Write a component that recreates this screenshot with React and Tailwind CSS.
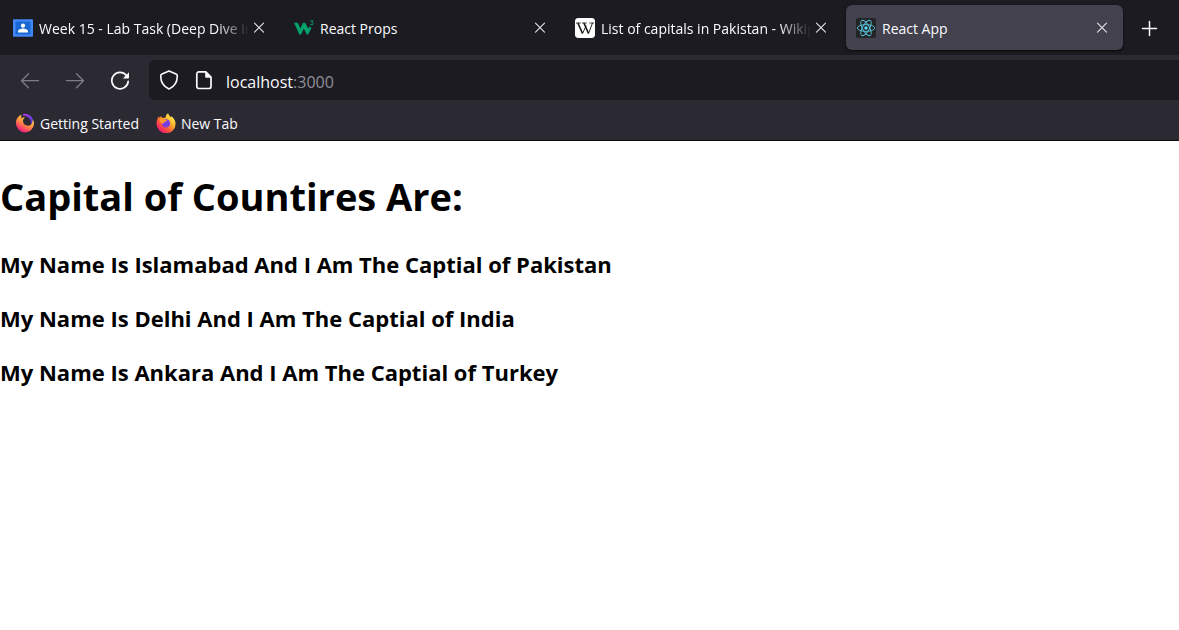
import React from "react";

function ClassroomIcon() {
  return (
    <svg viewBox="0 0 20 20" className="size-5 shrink-0" aria-hidden="true">
      <rect x="0" y="1.3" width="20" height="17.4" rx="0.8" fill="#4285f4" />
      <rect x="2.6" y="3.6" width="14.8" height="12.8" fill="#1967d2" />
      <circle cx="10" cy="7.7" r="2.1" fill="#fff" />
      <path d="M5 14.6v-1.3c0-1.9 3.3-2.8 5-2.8s5 .9 5 2.8v1.3z" fill="#fff" />
    </svg>
  );
}

function SchoolsIcon() {
  return (
    <svg viewBox="0 0 20 20" className="size-5 shrink-0" fill="none" aria-hidden="true">
      <path d="M0 4.800h3.800l2.600 5.600 2.600-5.600h2.200l3 6 1.200-2.300 2.100 1.300-3.300 6.600h-1.400l-3-6-2.700 6H5.400z" fill="#04a36c" />
      <path d="M16.200 2.800h2.900l-1.500 1.600c1.100 0 1.600.5 1.600 1.200 0 1.300-2 1.600-3.100.8" stroke="#04a36c" strokeWidth="0.9" />
    </svg>
  );
}

function WikiIcon() {
  return (
    <svg viewBox="0 0 20 20" className="size-5 shrink-0" fill="none" aria-hidden="true">
      <rect width="20" height="20" rx="3.4" fill="#fff" />
      <g stroke="#111">
        <path d="M1 5h4.800M7 5h4.800M14.400 5H19" strokeWidth="0.8" />
        <path d="M2.900 5l4.600 10.400M8.900 5l4.600 10.400" strokeWidth="1.500" />
        <path d="M7.500 15.600L11.200 7.600M13.500 15.600L17.500 5" strokeWidth="0.9" />
      </g>
    </svg>
  );
}

function ReactIcon() {
  return (
    <svg viewBox="0 0 20 20" className="size-5 shrink-0" fill="none" aria-hidden="true">
      <rect width="20" height="20" rx="2" fill="#222426" />
      <g stroke="#58c4dc" strokeWidth="0.9">
        <ellipse cx="10" cy="10" rx="8.7" ry="3.4" />
        <ellipse cx="10" cy="10" rx="8.7" ry="3.4" transform="rotate(60 10 10)" />
        <ellipse cx="10" cy="10" rx="8.7" ry="3.4" transform="rotate(120 10 10)" />
      </g>
      <circle cx="10" cy="10" r="1.7" fill="#61dafb" />
    </svg>
  );
}

function SwirlIcon() {
  return (
    <svg viewBox="0 0 20 20" className="size-5 shrink-0" fill="none" aria-hidden="true">
      <defs>
        <linearGradient id="swirl" x1="0.75" y1="0.1" x2="0.25" y2="0.95">
          <stop offset="0" stopColor="#ffd94a" />
          <stop offset="0.45" stopColor="#ff9640" />
          <stop offset="0.75" stopColor="#ff4f5e" />
          <stop offset="1" stopColor="#e31587" />
        </linearGradient>
        <linearGradient id="tail" x1="0" y1="0" x2="1" y2="1">
          <stop offset="0" stopColor="#b833e1" />
          <stop offset="0.5" stopColor="#7542e5" />
          <stop offset="1" stopColor="#592acb" />
        </linearGradient>
      </defs>
      <path d="M8 1C14 -.2 19 4.500 18.300 10.500L16 12C16.800 6.500 13.500 2.600 8 2.400z" fill="url(#tail)" />
      <path d="M6.500 1.800C3 3.100 1 6.400 1 10a9 9 0 0 0 18 .8c0-1.900-.5-3.200-1.300-4.500.2 3.600-1.700 6.500-4.500 6.500-3.200 0-5.200-2.200-5.200-4.700 0-1.600.8-2.900 2-3.800C8.500 4 7.500 4.500 6.800 5.400c-.7-1.100-.8-2.200-.3-3.600z" fill="url(#swirl)" />
    </svg>
  );
}

function FoxIcon() {
  return (
    <svg viewBox="0 0 20 20" className="size-5 shrink-0" fill="none" aria-hidden="true">
      <defs>
        <linearGradient id="fox" x1="0.85" y1="0.1" x2="0.15" y2="0.9">
          <stop offset="0" stopColor="#fff44f" />
          <stop offset="0.35" stopColor="#ffb02e" />
          <stop offset="0.65" stopColor="#ff5b36" />
          <stop offset="1" stopColor="#ec1279" />
        </linearGradient>
      </defs>
      <path d="M12.200.3c.4 2 1.500 2.700 2.700 4l.3-1C18 5.200 19.600 8 19.600 11A9.500 9.500 0 0 1 .5 10.500C.5 7.700 1.500 5 3 3.200l.8 2 1-2.200 1.700 2.100c1.100-.5 2-.5 3-.3 0-2 1.100-3.500 2.700-4.500z" fill="url(#fox)" />
      <circle cx="10" cy="10.400" r="4.200" fill="#7a3fe0" />
      <path d="M3.500 6.300c1.700-1.100 3.500-.9 5 .2l2.500.4c.1 1.100-1.300 1.500-2.200 1.900-.4 1.500-1.400 1.200-2.300 1.900l-1.700-.4z" fill="#ff9a2b" />
      <path d="M10 5c3.500.2 5.500 3 4.800 6 1.700-1.800 1.600-4.700-.6-6.500L12 3z" fill="#ffc83c" />
    </svg>
  );
}

function CloseIcon() {
  return (
    <svg viewBox="0 0 20 20" className="size-5" fill="none" stroke="currentColor" strokeWidth="1.1" strokeLinecap="round" aria-hidden="true">
      <path d="M5.500 5.200l9 9M14.500 5.200l-9 9" />
    </svg>
  );
}

function ArrowIcon({ forward }) {
  return (
    <svg viewBox="0 0 20 20" className="size-5" fill="none" stroke="currentColor" strokeWidth="1.300" strokeLinecap="round" strokeLinejoin="round" aria-hidden="true">
      {forward ? <path d="M1.500 10.700h17M11.500 3.700l7 7-7 7" /> : <path d="M18.500 10.700h-17M8.500 3.700l-7 7 7 7" />}
    </svg>
  );
}

function ReloadIcon() {
  return (
    <svg viewBox="0 0 20 20" className="size-5" fill="none" aria-hidden="true">
      <path d="M16.400 5.400A8.200 8.200 0 1 0 18.200 11.300" stroke="#fbfbfe" strokeWidth="1.700" strokeLinecap="round" />
      <path d="M19 2.300v5.400a.7.7 0 0 1-.7.7h-5.400z" fill="#fbfbfe" />
    </svg>
  );
}

function ShieldIcon() {
  return (
    <svg viewBox="0 0 20 20" className="size-5" fill="none" stroke="#fbfbfe" strokeWidth="1.600" strokeLinejoin="round" aria-hidden="true">
      <path d="M10 .9L17 3.900q1.300.6 1.300 2C18.300 12 15.500 16.500 10 19 4.500 16.500 1.700 12 1.700 5.900q0-1.400 1.300-2z" />
    </svg>
  );
}

function PageIcon() {
  return (
    <svg viewBox="0 0 20 20" className="size-5" fill="none" aria-hidden="true">
      <path d="M4.800 1.900h7l5.200 5.200v9.400a2 2 0 0 1-2 2H4.800a2 2 0 0 1-2-2V3.900a2 2 0 0 1 2-2z" stroke="#fbfbfe" strokeWidth="1.700" strokeLinejoin="round" />
      <path d="M11.200 1.500v5.200a1 1 0 0 0 1 1h5.200z" fill="#fbfbfe" />
    </svg>
  );
}

const tabs = [
  { title: "Week 15 - Lab Task (Deep Dive into React)", Icon: ClassroomIcon, long: true },
  { title: "React Props", Icon: SchoolsIcon },
  { title: "List of capitals in Pakistan - Wikipedia", Icon: WikiIcon, long: true },
  { title: "React App", Icon: ReactIcon, active: true },
];

const capitals = [
  { city: "Islamabad", country: "Pakistan" },
  { city: "Delhi", country: "India" },
  { city: "Ankara", country: "Turkey" },
];

function Tab({ title, Icon, active, long }) {
  return (
    <div className={`flex h-[45px] min-w-0 max-w-[277px] flex-1 items-center rounded-md pr-[11px] pl-[10px] ${active ? "bg-[#42414d] shadow-sm shadow-black/60" : ""}`}>
      <button type="button" role="tab" aria-selected={!!active} className="flex min-w-0 flex-1 items-center gap-[6px] text-left">
        <Icon />
        <span
          className={`min-w-0 flex-1 overflow-hidden pt-[2px] whitespace-nowrap ${long ? "[mask-image:linear-gradient(to_left,transparent,black_32px)]" : ""}`}
        >
          {title}
        </span>
      </button>
      <button type="button" aria-label={`Close ${title}`} className="shrink-0 text-[#e4e4ea]">
        <CloseIcon />
      </button>
    </div>
  );
}

export default function App() {
  return (
    <div className="flex min-h-screen flex-col bg-white font-['Segoe_UI','Open_Sans','Noto_Sans',sans-serif]">
      <header className="border-b border-[#0c0c0d] bg-[#2b2a33] text-sm text-[#fbfbfe]">
        <div className="flex h-[55px] items-center bg-[#1c1b22] pl-[3px]">
          <div role="tablist" className="flex min-w-0 flex-1 gap-1">
            {tabs.map((tab) => (
              <Tab key={tab.title} {...tab} />
            ))}
          </div>
          <button type="button" aria-label="Open a new tab" className="mr-[10px] ml-1 flex size-10 items-center justify-center">
            <svg viewBox="0 0 20 20" className="size-5" stroke="currentColor" strokeWidth="1.500" strokeLinecap="round" aria-hidden="true">
              <path d="M10.500 3.500v14M3.500 10.500h14" />
            </svg>
          </button>
        </div>
        <div className="flex items-center pt-[5px] pl-5">
          <nav aria-label="History" className="flex gap-[25px] pr-[19px]">
            <button type="button" aria-label="Back" disabled className="text-[#7f7e86]">
              <ArrowIcon />
            </button>
            <button type="button" aria-label="Forward" disabled className="text-[#7f7e86]">
              <ArrowIcon forward />
            </button>
            <button type="button" aria-label="Reload">
              <ReloadIcon />
            </button>
          </nav>
          <div className="flex h-10 flex-1 items-center rounded-l-md bg-[#1c1b22] pl-[10px]">
            <button type="button" aria-label="Tracking protection">
              <ShieldIcon />
            </button>
            <button type="button" aria-label="Site information" className="ml-[15px]">
              <PageIcon />
            </button>
            <button type="button" aria-label="Edit address" className="ml-3 flex-1 cursor-text pt-[3px] text-left text-base">
              localhost<span className="text-[#8f8f98]">:3000</span>
            </button>
          </div>
        </div>
        <nav aria-label="Bookmarks" className="flex h-10 items-center gap-[17px] pt-[6px] pl-[15px]">
          <a href="#getting-started" className="flex items-center gap-[5px]">
            <SwirlIcon />
            <span className="pt-[2px]">Getting Started</span>
          </a>
          <a href="#new-tab" className="flex items-center gap-[5px]">
            <FoxIcon />
            <span className="pt-[2px]">New Tab</span>
          </a>
        </nav>
      </header>
      <main className="pt-7 font-bold text-black">
        <h1 className="mb-[26px] text-[38px] leading-[54px]">Capital of Countires Are:</h1>
        {capitals.map(({ city, country }) => (
          <h3 key={city} className="mb-6 text-[22px] leading-[30px]">
            {`My Name Is ${city} And I Am The Captial of ${country}`}
          </h3>
        ))}
      </main>
    </div>
  );
}
